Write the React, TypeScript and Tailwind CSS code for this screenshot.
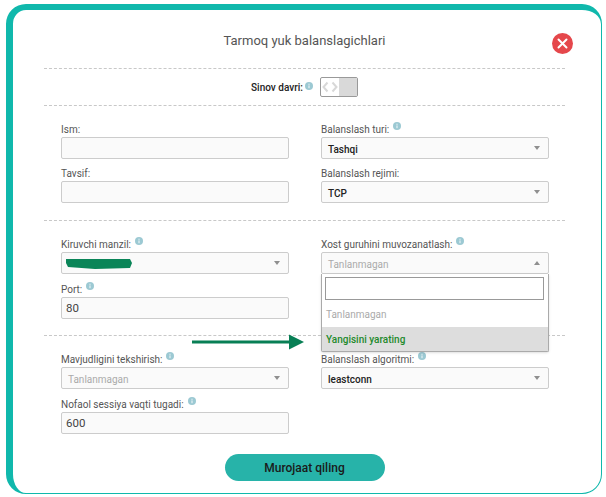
import React from "react";

const Info = ({ tight }: { tight?: boolean }) => (
  <svg
    width="8"
    height="8"
    viewBox="0 0 8 8"
    className={tight ? "shrink-0 ml-[2px] relative -top-[5px]" : "shrink-0 ml-[4px] relative -top-[7px]"}
  >
    <circle cx="4" cy="4" r="4" fill="#9cc9d3" />
    <rect x="3.4" y="3.4" width="1.2" height="2.8" fill="#e4f1f4" />
    <rect x="3.4" y="1.7" width="1.2" height="1.1" fill="#e4f1f4" />
  </svg>
);

const Label = ({ text, info }: { text: string; info?: boolean }) => (
  <div className="flex items-end h-[16px] text-[10px] leading-[14px] text-[#555555]">
    <span>{text}</span>
    {info && <Info />}
  </div>
);

const Caret = ({ up }: { up?: boolean }) => (
  <svg width="6" height="4" viewBox="0 0 6 4" className="shrink-0">
    <path d={up ? "M0 4L3 0L6 4Z" : "M0 0H6L3 4Z"} fill="#8f8f8f" />
  </svg>
);

const Input = ({ value }: { value?: string }) => (
  <div className="flex items-center h-[22px] rounded-[2px] border border-[#cccccc] bg-[#fafafa] px-[4px] pt-[1px] text-[11.5px] text-[#444444]">
    {value}
  </div>
);

const Select = ({ value, muted, up }: { value?: string; muted?: boolean; up?: boolean }) => (
  <div className="flex items-center justify-between h-[22px] rounded-[2px] border border-[#cccccc] bg-[#fafafa] pl-[6px] pr-[8px] text-[10px]">
    <span className={muted ? "pt-[3px] text-[#aaaaaa]" : "pt-[3px] text-[#222222] font-medium"}>{value}</span>
    <Caret up={up} />
  </div>
);

const Dash = () => <div className="border-t border-dashed border-[#c8c8c8]" />;

export default function App() {
  return (
    <div className="w-[606px] h-[497px] bg-white pt-[4px] pl-[6px] pr-[4px] pb-[3px] font-['Roboto',sans-serif] overflow-hidden">
      <div className="relative h-full rounded-[20px] border-t-[6px] border-l-[7px] border-r border-b border-[#10b8ac] bg-white pl-[31px] pr-[36px]">
        <div className="flex items-center justify-center h-[58px] pt-[4px] text-[13px] text-[#555555]">
          Tarmoq yuk balanslagichlari
        </div>
        <div className="absolute right-[28px] top-[23px] flex items-center justify-center w-[21px] h-[21px] rounded-full bg-[#e5474b]">
          <svg width="11" height="11" viewBox="0 0 11 11">
            <path d="M1.5 1.5L9.5 9.5M9.5 1.5L1.5 9.5" stroke="#ffffff" strokeWidth="2" strokeLinecap="round" />
          </svg>
        </div>
        <Dash />
        <div className="flex items-center justify-center gap-[7px] h-[36px]">
          <div className="flex items-end text-[10px] font-medium text-[#222222]">
            <span>Sinov davri:</span>
            <Info tight />
          </div>
          <div className="flex w-[38px] h-[20px] rounded-[2px] border border-[#999999] bg-white overflow-hidden">
            <div className="flex items-center justify-center w-[18px]">
              <svg width="16" height="12" viewBox="0 0 16 12">
                <path d="M5.5 1.5L1.5 6L5.5 10.5M10.5 1.5L14.5 6L10.5 10.5" fill="none" stroke="#d8d8d8" strokeWidth="2" />
              </svg>
            </div>
            <div className="flex-1 bg-[#d9d9d9]" />
          </div>
        </div>
        <Dash />

        <div className="grid grid-cols-[228px_228px] gap-x-[32px] pl-[17px] pt-[15px] pb-[17px]">
          <div className="flex flex-col">
            <Label text="Ism:" />
            <Input />
            <div className="h-[6px]" />
            <Label text="Tavsif:" />
            <Input />
          </div>
          <div className="flex flex-col">
            <Label text="Balanslash turi:" info />
            <Select value="Tashqi" />
            <div className="h-[6px]" />
            <Label text="Balanslash rejimi:" />
            <Select value="TCP" />
          </div>
        </div>
        <Dash />

        <div className="grid grid-cols-[228px_228px] gap-x-[32px] pl-[17px] pt-[15px] pb-[16px]">
          <div className="flex flex-col">
            <Label text="Kiruvchi manzil:" info />
            <Select value="" />
            <div className="h-[7px]" />
            <Label text="Port:" info />
            <Input value="80" />
          </div>
          <div className="relative flex flex-col">
            <Label text="Xost guruhini muvozanatlash:" info />
            <Select value="Tanlanmagan" muted up />
            <div className="absolute left-0 top-[38px] z-10 w-[228px] h-[78px] rounded-b-[2px] border border-t-0 border-[#aaaaaa] bg-white text-[10px] shadow-sm">
              <div className="pl-[3px] pr-[4px] pt-[3px]">
                <div className="h-[23px] border border-[#999999] bg-white" />
              </div>
              <div className="flex items-center h-[27px] pl-[4px] pt-[2px] text-[#aaaaaa]">Tanlanmagan</div>
              <div className="flex items-center h-[24px] pl-[4px] pt-[1px] bg-[#dddddd] font-medium text-[#1d8a2c]">Yangisini yarating</div>
            </div>
          </div>
        </div>
        <Dash />

        <div className="grid grid-cols-[228px_228px] gap-x-[32px] pl-[17px] pt-[15px]">
          <div className="flex flex-col">
            <Label text="Mavjudligini tekshirish:" info />
            <Select value="Tanlanmagan" muted />
            <div className="h-[7px]" />
            <Label text="Nofaol sessiya vaqti tugadi:" info />
            <Input value="600" />
          </div>
          <div className="flex flex-col">
            <Label text="Balanslash algoritmi:" info />
            <Select value="leastconn" />
          </div>
        </div>

        <div className="flex justify-center pt-[20px]">
          <div className="flex items-center justify-center w-[160px] h-[27px] rounded-full bg-[#27b3a9] text-[12px] font-medium text-[#1a1a1a]">
            Murojaat qiling
          </div>
        </div>

        <svg className="absolute z-20 left-[179px] top-[324px]" width="112" height="16" viewBox="0 0 112 16">
          <path d="M0 6.5H98V9.5H0Z" fill="#087f55" />
          <path d="M97 0.5L112 8L97 15.5Z" fill="#087f55" />
        </svg>
        <svg className="absolute z-20 left-[52px] top-[248px]" width="68" height="12" viewBox="0 0 68 12">
          <path d="M1 1H65L67 5L65 10L30 11L3 9L1 5Z" fill="#0a8558" />
        </svg>
      </div>
    </div>
  );
}
